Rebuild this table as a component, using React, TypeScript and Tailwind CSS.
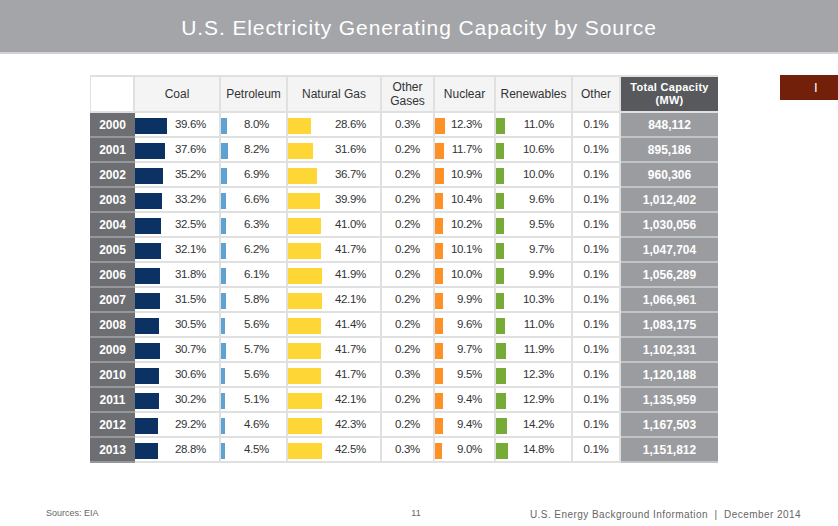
const rows: [string, number, number, number, string, number, number, string, string][] = [
  ['2000', 39.6, 8.0, 28.6, '0.3', 12.3, 11.0, '0.1', '848,112'],
  ['2001', 37.6, 8.2, 31.6, '0.2', 11.7, 10.6, '0.1', '895,186'],
  ['2002', 35.2, 6.9, 36.7, '0.2', 10.9, 10.0, '0.1', '960,306'],
  ['2003', 33.2, 6.6, 39.9, '0.2', 10.4, 9.6, '0.1', '1,012,402'],
  ['2004', 32.5, 6.3, 41.0, '0.2', 10.2, 9.5, '0.1', '1,030,056'],
  ['2005', 32.1, 6.2, 41.7, '0.2', 10.1, 9.7, '0.1', '1,047,704'],
  ['2006', 31.8, 6.1, 41.9, '0.2', 10.0, 9.9, '0.1', '1,056,289'],
  ['2007', 31.5, 5.8, 42.1, '0.2', 9.9, 10.3, '0.1', '1,066,961'],
  ['2008', 30.5, 5.6, 41.4, '0.2', 9.6, 11.0, '0.1', '1,083,175'],
  ['2009', 30.7, 5.7, 41.7, '0.2', 9.7, 11.9, '0.1', '1,102,331'],
  ['2010', 30.6, 5.6, 41.7, '0.3', 9.5, 12.3, '0.1', '1,120,188'],
  ['2011', 30.2, 5.1, 42.1, '0.2', 9.4, 12.9, '0.1', '1,135,959'],
  ['2012', 29.2, 4.6, 42.3, '0.2', 9.4, 14.2, '0.1', '1,167,503'],
  ['2013', 28.8, 4.5, 42.5, '0.3', 9.0, 14.8, '0.1', '1,151,812'],
];

const cols = 'grid grid-cols-[45px_86px_67px_94px_53px_61px_77px_48px_97px]';
const line = 'border-r-2 border-b-2 border-[#e0e0e0]';
const num = 'text-[11.5px] tracking-[-0.3px] text-[#333]';

function BarCell({ pct, color, pad }: { pct: number; color: string; pad: string }) {
  return (
    <div className={`${line} flex items-center`}>
      <div className={`h-[16px] shrink-0 mt-[2px] ${color}`} style={{ width: pct * 0.8 }} />
      <span className={`ml-auto ${pad} ${num}`}>{pct.toFixed(1)}%</span>
    </div>
  );
}

function Head({ children, className = '' }: { children: React.ReactNode; className?: string }) {
  return (
    <div className={`${line} border-t-2 bg-[#f4f4f4] flex items-center justify-center text-center text-[12px] leading-[14px] text-[#333] ${className}`}>
      {children}
    </div>
  );
}

export default function App() {
  return (
    <div className="w-[838px] h-[526px] bg-white flex flex-col font-['Liberation_Sans',Arial,sans-serif] overflow-hidden">
      <div className="h-[54px] shrink-0 bg-[#a4a5a9] border-b-2 border-[#d2d2d4] flex items-center justify-center">
        <h1 className="text-white text-[21px] tracking-[0.9px] pt-[4px]">U.S. Electricity Generating Capacity by Source</h1>
      </div>

      <div className="flex items-start pt-[21px] pl-[90px]">
        <div className="w-[628px]">
          <div className={`${cols} h-[38px]`}>
            <div className="border-l border-t-2 border-r-2 border-b-2 border-[#e0e0e0] bg-white" />
            <Head>Coal</Head>
            <Head>Petroleum</Head>
            <Head>Natural Gas</Head>
            <Head>Other<br />Gases</Head>
            <Head>Nuclear</Head>
            <Head>Renewables</Head>
            <Head>Other</Head>
            <div className="bg-[#58595d] border-b-2 border-t-2 border-t-[#e0e0e0] border-b-[#e0e0e0] flex items-center justify-center text-center text-white font-bold text-[11px] leading-[13px] tracking-[0.3px]">
              Total Capacity<br />(MW)
            </div>
          </div>
          {rows.map((r) => (
            <div key={r[0]} className={`${cols} h-[25px]`}>
              <div className="bg-[#6d6e72] border-b-2 border-[#96979a] flex items-center justify-center text-white font-bold text-[12px]">
                {r[0]}
              </div>
              <BarCell pct={r[1]} color="bg-[#0b3262]" pad="pr-[13px]" />
              <BarCell pct={r[2]} color="bg-[#5ea2d2]" pad="pr-[17px]" />
              <BarCell pct={r[3]} color="bg-[#fed636]" pad="pr-[14px]" />
              <div className={`${line} flex items-center justify-center`}>
                <span className={num}>{r[4]}%</span>
              </div>
              <BarCell pct={r[5]} color="bg-[#fd9125]" pad="pr-[12px]" />
              <BarCell pct={r[6]} color="bg-[#77ab38]" pad="pr-[17px]" />
              <div className={`${line} flex items-center justify-center`}>
                <span className={num}>{r[7]}%</span>
              </div>
              <div className="bg-[#9b9c9f] border-b-2 border-[#c2c3c5] flex items-center justify-center text-white font-bold text-[12px]">
                {r[8]}
              </div>
            </div>
          ))}
        </div>
        <div className="ml-auto w-[58px] h-[25px] bg-[#73200b] flex items-center pl-[34px] text-white text-[13px]">
          I
        </div>
      </div>

      <div className="mt-auto h-[19px] grid grid-cols-[1fr_auto_1fr] items-start text-[9px] text-[#666] whitespace-nowrap">
        <div className="pl-[46px]">Sources: EIA</div>
        <div className="text-center pr-[6px]">11</div>
        <div className="text-right pr-[37px] text-[10px] tracking-[0.45px]">U.S. Energy Background Information&nbsp; |&nbsp; December 2014</div>
      </div>
    </div>
  );
}
